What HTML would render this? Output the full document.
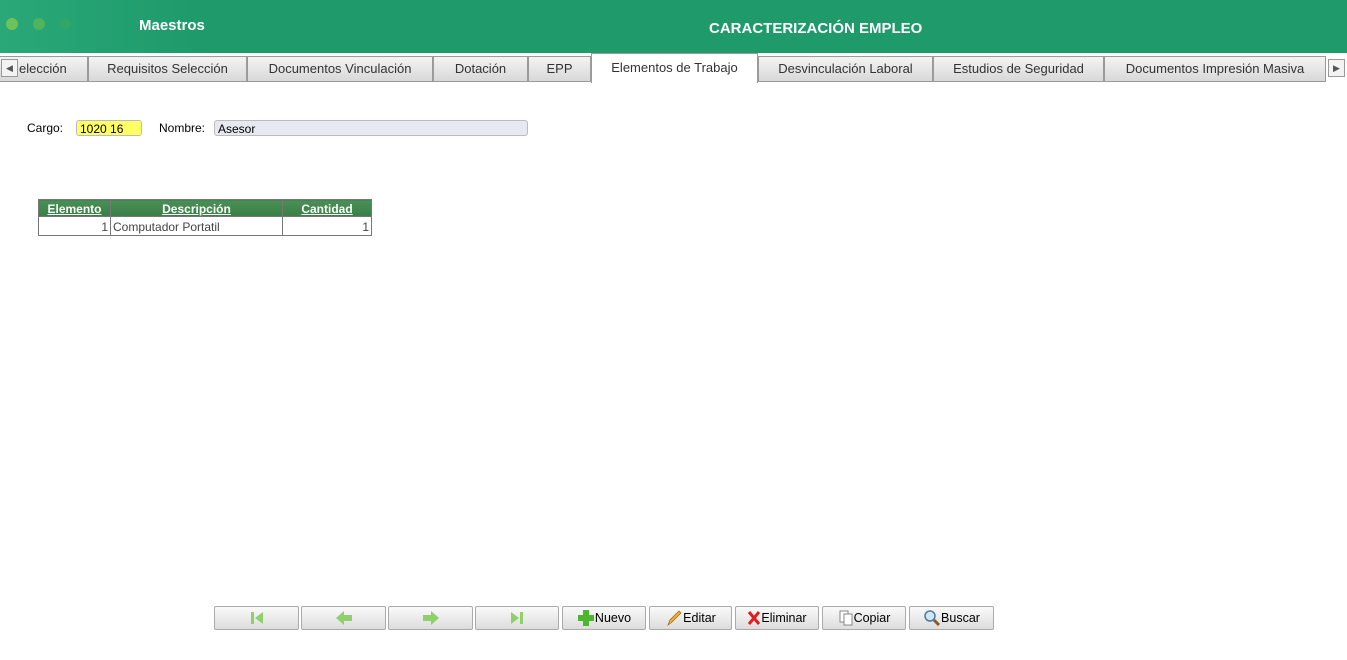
<!DOCTYPE html>
<html><head><meta charset="utf-8"><style>
*{box-sizing:border-box;margin:0;padding:0}
body{width:1347px;height:660px;background:#fff;font-family:"Liberation Sans",sans-serif;position:relative;overflow:hidden}
.hdr{position:absolute;left:0;top:0;width:1347px;height:53px;background:#1e9a6b}
.glow{position:absolute;left:0;top:0;width:200px;height:53px;background:linear-gradient(90deg,#2aa878,#1e9a6b)}
.dot{position:absolute;top:18px;width:12px;height:12px;border-radius:50%}
.t1{position:absolute;left:139px;top:17px;color:#fff;font-weight:bold;font-size:15px}
.t2{position:absolute;left:709px;top:20px;color:#fff;font-weight:bold;font-size:15px}
.tabs{position:absolute;top:53px;left:0;width:1347px;height:29px;background:#fff}
.tab{position:absolute;top:3px;height:26px;border:1px solid #9a9a9a;background:linear-gradient(#f4f4f4,#d8d8d8);font-size:13px;color:#333;text-align:center;line-height:24px;white-space:nowrap;overflow:hidden}
.tab.act{top:0;height:30px;background:#fff;border-bottom:none;line-height:28px}
.arr{position:absolute;top:59px;width:17px;height:18px;border:1px solid #999;background:#f3f3f3;font-size:9px;color:#555;text-align:center;line-height:16px}
.lbl{position:absolute;font-size:12px;color:#000}
.inp{position:absolute;height:16px;border:1px solid #bbb;border-radius:3px;font-size:12px;padding-left:3px;line-height:16px}
table{position:absolute;left:38px;top:199px;border-collapse:collapse;font-size:12px}
th{background:linear-gradient(#4a8f55,#3a7f45);color:#fff;text-decoration:underline;height:17px;border:1px solid #777;font-weight:bold;padding-top:1px}
td{height:19px;border:1px solid #777;color:#444;padding:1px 2px 0}
.btn{position:absolute;top:606px;height:24px;border:1px solid #aaa;border-radius:2px;background:linear-gradient(#fafafa,#dcdcdc);font-size:12.5px;color:#000;display:flex;align-items:center;justify-content:center}
</style></head><body>
<div class="hdr"><div class="glow"></div>
<div class="dot" style="left:6px;background:#6ec25a"></div>
<div class="dot" style="left:33px;background:#4fb45c"></div>
<div class="dot" style="left:59px;background:#2fa667"></div>
<div class="t1">Maestros</div><div class="t2">CARACTERIZACIÓN EMPLEO</div></div>
<div class="tabs">
<div class="tab" style="left:-2px;width:90px;text-align:left;padding-left:20px">elección</div>
<div class="tab" style="left:88px;width:159px">Requisitos Selección</div>
<div class="tab" style="left:247px;width:186px">Documentos Vinculación</div>
<div class="tab" style="left:433px;width:95px">Dotación</div>
<div class="tab" style="left:528px;width:63px">EPP</div>
<div class="tab act" style="left:591px;width:167px">Elementos de Trabajo</div>
<div class="tab" style="left:758px;width:175px">Desvinculación Laboral</div>
<div class="tab" style="left:933px;width:171px">Estudios de Seguridad</div>
<div class="tab" style="left:1104px;width:222px">Documentos Impresión Masiva</div>
</div>
<div class="arr" style="left:1px">◀</div>
<div class="arr" style="left:1328px">▶</div>
<div class="lbl" style="left:27px;top:121px">Cargo:</div>
<div class="inp" style="left:76px;top:120px;width:66px;background:#ffff66">1020 16</div>
<div class="lbl" style="left:159px;top:121px">Nombre:</div>
<div class="inp" style="left:214px;top:120px;width:314px;background:#e8e8f2">Asesor</div>
<table><tr><th style="width:72px">Elemento</th><th style="width:172px">Descripción</th><th style="width:89px">Cantidad</th></tr>
<tr><td style="text-align:right">1</td><td>Computador Portatil</td><td style="text-align:right">1</td></tr></table>
<div class="btn" style="left:214px;width:85px"><svg width="16" height="16"><rect x="2" y="2" width="3" height="12" fill="#8fd06a"/><path d="M14 2L6 8L14 14Z" fill="#8fd06a"/></svg></div>
<div class="btn" style="left:301px;width:85px"><svg width="18" height="16"><path d="M1 8L9 1V5H17V11H9V15Z" fill="#8fd06a"/></svg></div>
<div class="btn" style="left:388px;width:85px"><svg width="18" height="16"><path d="M17 8L9 1V5H1V11H9V15Z" fill="#8fd06a"/></svg></div>
<div class="btn" style="left:475px;width:84px"><svg width="16" height="16"><rect x="11" y="2" width="3" height="12" fill="#8fd06a"/><path d="M2 2L10 8L2 14Z" fill="#8fd06a"/></svg></div>
<div class="btn" style="left:562px;width:84px"><svg width="18" height="18"><path d="M6 1H12V6H17V12H12V17H6V12H1V6H6Z" fill="#4cb62e"/></svg>Nuevo</div>
<div class="btn" style="left:649px;width:83px"><svg width="18" height="18"><path d="M3 16L5 11L14 2L16 4L7 13Z" fill="#f0b030" stroke="#a06010" stroke-width=".7"/></svg>Editar</div>
<div class="btn" style="left:735px;width:84px"><svg width="14" height="16"><path d="M2 2L12 14M12 2L2 14" stroke="#e02020" stroke-width="3"/></svg>Eliminar</div>
<div class="btn" style="left:822px;width:84px"><svg width="16" height="18"><rect x="2" y="2" width="8" height="11" fill="#fff" stroke="#888"/><rect x="6" y="5" width="8" height="11" fill="#fff" stroke="#888"/></svg>Copiar</div>
<div class="btn" style="left:909px;width:85px"><svg width="18" height="18"><circle cx="7" cy="7" r="5" fill="#cfe6f7" stroke="#4a7aa8" stroke-width="1.5"/><path d="M11 11L16 16" stroke="#8a5a2a" stroke-width="3"/></svg>Buscar</div>
</body></html>
